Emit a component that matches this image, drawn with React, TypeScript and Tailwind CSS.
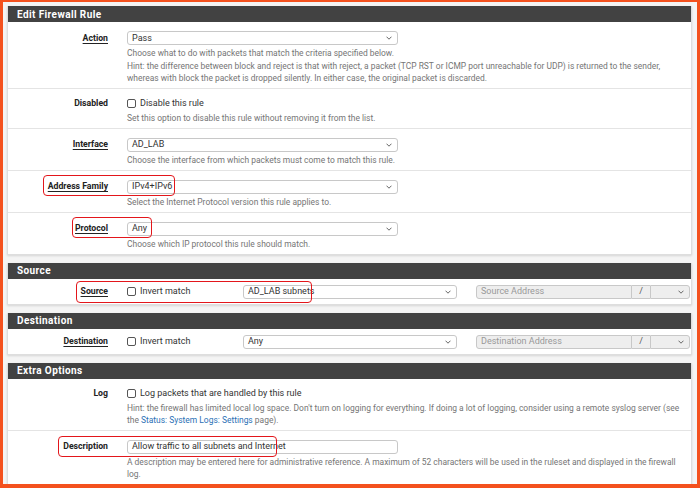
import React from "react";

const Chevron = () => (
  <svg width="6" height="4" viewBox="0 0 6 4" className="shrink-0">
    <polyline points="0.5,0.7 3,3.2 5.5,0.7" fill="none" stroke="#555" strokeWidth="0.9" />
  </svg>
);

const Select = ({ value, width = "w-[271px]" }: { value: string; width?: string }) => (
  <div
    className={`${width} h-[14px] border border-[#c8c8c8] rounded-[3px] bg-white flex items-center justify-between pl-[4px] pr-[5px] text-[9px] text-[#333]`}
  >
    <span className="leading-none">{value}</span>
    <Chevron />
  </div>
);

const Checkbox = () => (
  <span className="inline-block w-[9px] h-[9px] border border-[#555] rounded-[2px] bg-white shrink-0" />
);

const Header = ({ title }: { title: string }) => (
  <div className="h-[16px] bg-[#424242] text-white font-bold text-[10px] tracking-[0.4px] pl-[9px] flex items-center">
    {title}
  </div>
);

const Label = ({ text, underline = false, h = "h-[14px]" }: { text: string; underline?: boolean; h?: string }) => (
  <div className={`w-[100px] shrink-0 text-right ${h} flex items-center justify-end`}>
    <span
      className={`font-bold text-[8.7px] text-[#222] leading-none ${
        underline ? "underline decoration-[1px] underline-offset-[2px]" : ""
      }`}
    >
      {text}
    </span>
  </div>
);

const Help = ({ children, leading = "leading-[12px]" }: { children: React.ReactNode; leading?: string }) => (
  <div className={`mt-[2px] text-[8.45px] ${leading} text-[#757575] whitespace-nowrap`}>{children}</div>
);

const Mark = ({ className }: { className: string }) => (
  <div className={`absolute pointer-events-none border-[1.5px] border-[#e3161b] rounded-[4px] ${className}`} />
);

const Row = ({
  children,
  last = false,
  pb = "pb-[4px]",
}: {
  children: React.ReactNode;
  last?: boolean;
  pb?: string;
}) => (
  <div className={`relative flex pt-[9px] ${pb} ${last ? "" : "border-b border-[#e4e4e4]"}`}>{children}</div>
);

const Content = ({ children }: { children: React.ReactNode }) => (
  <div className="ml-[19px] flex-1">{children}</div>
);

const CheckLine = ({ text, h = "h-[12px]" }: { text: string; h?: string }) => (
  <div className={`${h} flex items-center gap-[4px] text-[9px] text-[#333]`}>
    <Checkbox />
    <span>{text}</span>
  </div>
);

const AddressRow = ({
  label,
  value,
  placeholder,
  mark,
}: {
  label: string;
  value: string;
  placeholder: string;
  mark?: boolean;
}) => (
  <div className="relative flex items-center pt-[6px] pb-[5px]">
    <Label text={label} underline />
    <div className="ml-[19px] w-[116px] shrink-0">
      <CheckLine text="Invert match" h="h-[14px]" />
    </div>
    <Select value={value} width="w-[214px]" />
    <div className="ml-[19px] flex h-[14px] w-[214px] text-[9px]">
      <div className="w-[156px] border border-[#c8c8c8] rounded-l-[3px] bg-[#eeeeee] text-[#999] pl-[4px] flex items-center">
        {placeholder}
      </div>
      <div className="w-[18px] border-y border-[#c8c8c8] bg-[#eeeeee] text-[#555] flex items-center justify-center">
        /
      </div>
      <div className="flex-1 border border-[#c8c8c8] rounded-r-[3px] bg-[#eeeeee] flex items-center justify-end pr-[5px]">
        <Chevron />
      </div>
    </div>
    {mark && <Mark className="left-[68px] top-[2px] w-[236px] h-[22px]" />}
  </div>
);

const Panel = ({ children }: { children: React.ReactNode }) => (
  <div className="bg-white border border-[#dedede] border-t-0 shadow-[0_1px_2px_rgba(0,0,0,0.12)] mb-[8px]">
    {children}
  </div>
);

export default function App() {
  return (
    <div
      className="w-[700px] h-[488px] overflow-hidden border-t-2 border-l-[3px] border-r-[3px] border-b-[4px] border-[#f4511e] bg-[#f4f4f4]"
      style={{ fontFamily: "Roboto, 'Liberation Sans', sans-serif" }}
    >
      <div className="pt-[4px] pl-[4px] pr-[5px]">
        <Panel>
          <Header title="Edit Firewall Rule" />
          <Row pb="pb-[3px]">
            <Label text="Action" underline />
            <Content>
              <Select value="Pass" />
              <Help leading="leading-[12.5px]">
                Choose what to do with packets that match the criteria specified below.
                <br />
                Hint: the difference between block and reject is that with reject, a packet (TCP RST or ICMP port unreachable for UDP) is returned to the sender,
                <br />
                whereas with block the packet is dropped silently. In either case, the original packet is discarded.
              </Help>
            </Content>
          </Row>
          <Row>
            <Label text="Disabled" h="h-[12px]" />
            <Content>
              <CheckLine text="Disable this rule" />
              <Help>Set this option to disable this rule without removing it from the list.</Help>
            </Content>
          </Row>
          <Row>
            <Label text="Interface" underline />
            <Content>
              <Select value="AD_LAB" />
              <Help>Choose the interface from which packets must come to match this rule.</Help>
            </Content>
          </Row>
          <Row>
            <Label text="Address Family" underline />
            <Content>
              <Select value="IPv4+IPv6" />
              <Help>Select the Internet Protocol version this rule applies to.</Help>
            </Content>
            <Mark className="left-[35px] top-[4px] w-[132px] h-[21px]" />
          </Row>
          <Row last>
            <Label text="Protocol" underline />
            <Content>
              <Select value="Any" />
              <Help>Choose which IP protocol this rule should match.</Help>
            </Content>
            <Mark className="left-[64px] top-[4px] w-[80px] h-[21px]" />
          </Row>
        </Panel>

        <Panel>
          <Header title="Source" />
          <AddressRow label="Source" value="AD_LAB subnets" placeholder="Source Address" mark />
        </Panel>

        <Panel>
          <Header title="Destination" />
          <AddressRow label="Destination" value="Any" placeholder="Destination Address" />
        </Panel>

        <Panel>
          <Header title="Extra Options" />
          <Row>
            <Label text="Log" h="h-[12px]" />
            <Content>
              <CheckLine text="Log packets that are handled by this rule" />
              <Help>
                Hint: the firewall has limited local log space. Don't turn on logging for everything. If doing a lot of logging, consider using a remote syslog server (see
                <br />
                the <span className="text-[#2a6fb5]">Status: System Logs: Settings</span> page).
              </Help>
            </Content>
          </Row>
          <Row last>
            <Label text="Description" />
            <Content>
              <div className="w-[271px] h-[14px] border border-[#c8c8c8] rounded-[3px] bg-white flex items-center pl-[4px] text-[9px] text-[#333]">
                Allow traffic to all subnets and Internet
              </div>
              <Help>
                A description may be entered here for administrative reference. A maximum of 52 characters will be used in the ruleset and displayed in the firewall
                <br />
                log.
              </Help>
            </Content>
            <Mark className="left-[50px] top-[5px] w-[219px] h-[21px]" />
          </Row>
        </Panel>
      </div>
    </div>
  );
}
